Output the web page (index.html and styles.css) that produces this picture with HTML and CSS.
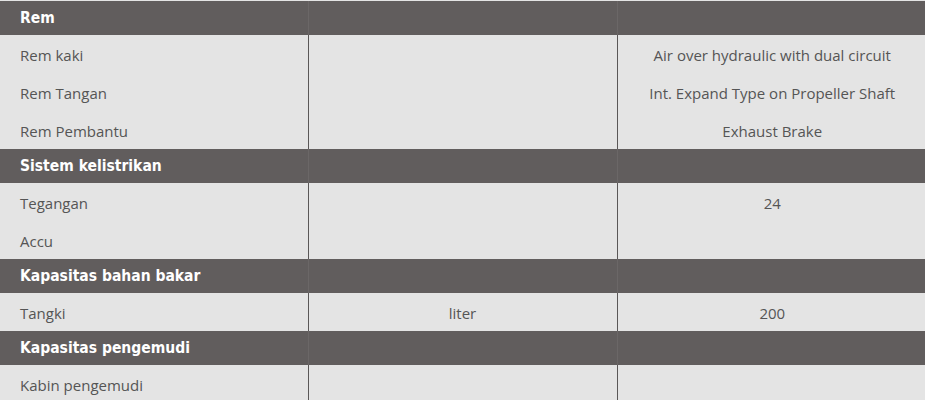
FILE: index.html
```html
<!DOCTYPE html>
<html lang="id">
<head>
    <meta charset="UTF-8">
    <meta name="viewport" content="width=device-width, initial-scale=1.0">
    <title>Spesifikasi</title>
    <link rel="stylesheet" href="styles.css">
</head>
<body>
    <table class="spec-table">
        <colgroup>
            <col class="col-name">
            <col class="col-unit">
            <col class="col-value">
        </colgroup>
        <!-- Rem -->
        <tr class="group-row">
            <td>Rem</td><td></td><td></td>
        </tr>
        <tr>
            <td>Rem kaki</td><td></td><td>Air over hydraulic with dual circuit</td>
        </tr>
        <tr>
            <td>Rem Tangan</td><td></td><td>Int. Expand Type on Propeller Shaft</td>
        </tr>
        <tr>
            <td>Rem Pembantu</td><td></td><td>Exhaust Brake</td>
        </tr>
        <!-- Sistem kelistrikan -->
        <tr class="group-row">
            <td>Sistem kelistrikan</td><td></td><td></td>
        </tr>
        <tr>
            <td>Tegangan</td><td></td><td>24</td>
        </tr>
        <tr>
            <td>Accu</td><td></td><td></td>
        </tr>
        <!-- Kapasitas bahan bakar -->
        <tr class="group-row">
            <td>Kapasitas bahan bakar</td><td></td><td></td>
        </tr>
        <tr>
            <td>Tangki</td><td>liter</td><td>200</td>
        </tr>
        <!-- Kapasitas pengemudi -->
        <tr class="group-row">
            <td>Kapasitas pengemudi</td><td></td><td></td>
        </tr>
        <tr>
            <td>Kabin pengemudi</td><td></td><td></td>
        </tr>
    </table>
</body>
</html>
```

FILE: styles.css
```css
html {
    overflow: hidden;
}
body {
    margin: 0;
    padding: 1px 0 0 0;
    background: #e4e4e4;
    font-family: 'Open Sans', sans-serif;
    color: #555555;
}
.spec-table {
    width: 927px;
    table-layout: fixed;
    border-collapse: collapse;
    background: #e4e4e4;
}
.col-name {
    width: 308px;
}
.col-unit {
    width: 309px;
}
.col-value {
    width: 310px;
}
.spec-table td {
    height: 38px;
    padding: 2px 20px 0 20px;
    font-size: 15px;
    text-align: center;
    vertical-align: middle;
    border-left: 1px solid #5a5757;
    box-sizing: border-box;
}
.spec-table td:first-child {
    text-align: left;
    border-left: none;
}
.spec-table .group-row td {
    height: 34px;
    padding-top: 0;
    background: #615d5d;
    color: #ffffff;
    font-family: 'DejaVu Sans', sans-serif;
    font-stretch: condensed;
    font-weight: bold;
    font-size: 15.5px;
    border-left-color: #6b6767;
}
```
